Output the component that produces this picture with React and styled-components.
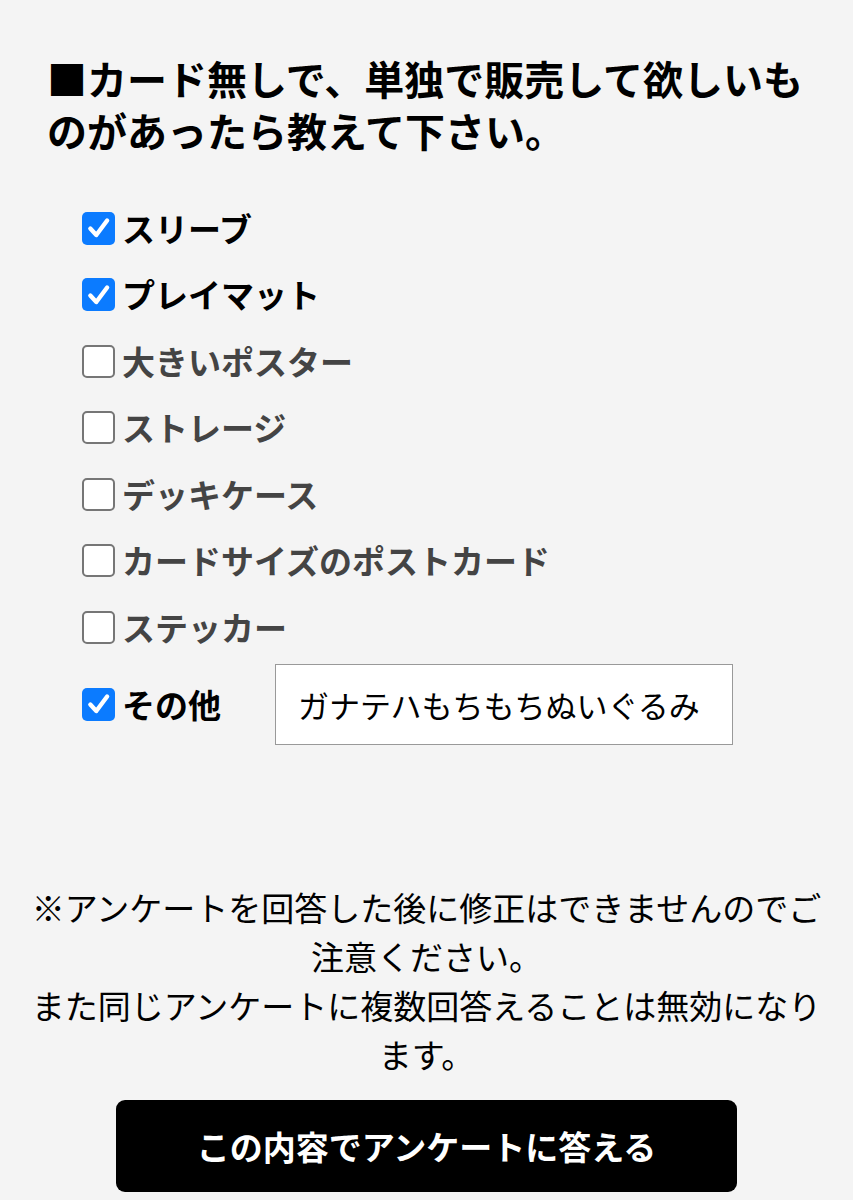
import React from "react";
import styled, { createGlobalStyle } from "styled-components";

const GlobalStyle = createGlobalStyle`
  html, body {
    margin: 0;
    padding: 0;
    background: #f4f4f4;
  }
  body {
    font-family: "Noto Sans CJK JP", "Noto Sans", sans-serif;
    color: #000;
  }
`;

const items = [
  { label: "スリーブ", checked: true },
  { label: "プレイマット", checked: true },
  { label: "大きいポスター", checked: false },
  { label: "ストレージ", checked: false },
  { label: "デッキケース", checked: false },
  { label: "カードサイズのポストカード", checked: false },
  { label: "ステッカー", checked: false },
];

const Check = ({ checked }) => (
  <Box $checked={checked}>
    {checked && (
      <svg width="26" height="26" viewBox="0 0 24 24">
        <path
          d="M4 12.5 L9.5 18.5 L19.5 5"
          fill="none"
          stroke="#fff"
          strokeWidth="4"
          strokeLinecap="round"
          strokeLinejoin="round"
        />
      </svg>
    )}
  </Box>
);

export default function App() {
  return (
    <>
      <GlobalStyle />
      <Page>
        <Question>■カード無しで、単独で販売して欲しいものがあったら教えて下さい。</Question>
        <Options>
          {items.map((it) => (
            <Row key={it.label}>
              <Check checked={it.checked} />
              <Label $checked={it.checked}>{it.label}</Label>
            </Row>
          ))}
          <OtherRow>
            <Check checked />
            <Label $checked>その他</Label>
            <TextBox defaultValue="ガナテハもちもちぬいぐるみ" />
          </OtherRow>
        </Options>
        <Notice>
          ※アンケートを回答した後に修正はできませんのでご注意ください。
          <br />
          また同じアンケートに複数回答えることは無効になります。
        </Notice>
        <Submit type="button">この内容でアンケートに答える</Submit>
      </Page>
    </>
  );
}

const Page = styled.div`
  display: flex;
  flex-direction: column;
  padding: 52px 0 0;
  min-height: 1200px;
  box-sizing: border-box;
`;

const Question = styled.h2`
  margin: 0;
  padding: 0 38px 0 47px;
  font-size: 40px;
  line-height: 52px;
  font-weight: 700;
  color: #000;
`;

const Options = styled.div`
  display: flex;
  flex-direction: column;
  margin-top: 39px;
  padding-left: 82px;
`;

const Row = styled.label`
  display: flex;
  align-items: center;
  height: 66.5px;
`;

const OtherRow = styled(Row)`
  height: 81px;
  margin-top: 3px;
`;

const Box = styled.span`
  display: flex;
  align-items: center;
  justify-content: center;
  width: 33px;
  height: 33px;
  box-sizing: border-box;
  border-radius: 5px;
  flex-shrink: 0;
  background: ${(p) => (p.$checked ? "#0b7bff" : "#fff")};
  border: ${(p) => (p.$checked ? "none" : "2px solid #767676")};
`;

const Label = styled.span`
  margin-left: 7px;
  font-size: 33px;
  font-weight: 700;
  line-height: 1;
  color: ${(p) => (p.$checked ? "#000" : "#444")};
`;

const TextBox = styled.input`
  margin-left: 54px;
  width: 458px;
  height: 81px;
  box-sizing: border-box;
  padding: 0 22px;
  border: 1px solid #999;
  background: #fff;
  font-family: "Noto Sans CJK JP", sans-serif;
  font-size: 31px;
  color: #000;
  outline: none;
`;

const Notice = styled.p`
  margin: 138px 0 0;
  padding: 0 20px;
  text-align: center;
  font-size: 33px;
  line-height: 49px;
  color: #000;
`;

const Submit = styled.button`
  align-self: center;
  margin-top: 21px;
  width: 621px;
  height: 92px;
  border: none;
  border-radius: 9px;
  background: #000;
  color: #fff;
  font-family: "Noto Sans CJK JP", sans-serif;
  font-size: 33px;
  font-weight: 700;
  cursor: pointer;
`;
